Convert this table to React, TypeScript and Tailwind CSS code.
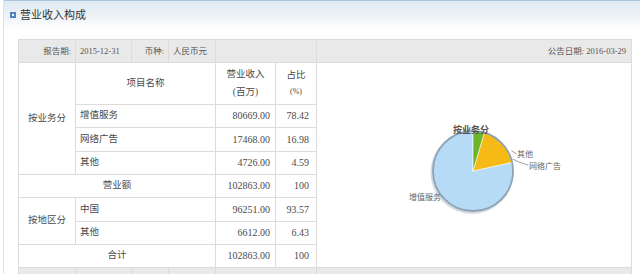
import { Fragment } from "react";

const font = "font-['Liberation_Serif','Noto_Sans_CJK_SC',serif]";

function PieChart() {
  return (
    <svg width="314" height="204" viewBox="317 64 314 204" className="block">
      <circle cx="472" cy="173.5" r="41.5" fill="#c3cad2" opacity="0.7" />
      <path d="M473,172 L512.07,163.41 A40,40 0 1,1 473,132 Z" fill="#b6dbf7" stroke="#ffffff" strokeWidth="0.6" />
      <path d="M473,172 L484.36,133.65 A40,40 0 0,1 512.07,163.41 Z" fill="#f5ba16" stroke="#ffffff" strokeWidth="0.6" />
      <path d="M473,172 L473,132 A40,40 0 0,1 484.36,133.65 Z" fill="#6db62c" stroke="#ffffff" strokeWidth="0.6" />
      <circle cx="473" cy="172" r="40" fill="none" stroke="#8ea2b6" strokeWidth="1.8" />
      <polyline points="511.5,151.5 516.5,155" fill="none" stroke="#8a8a8a" strokeWidth="0.8" />
      <polyline points="512.5,160 520,163.5 528,166" fill="none" stroke="#8a8a8a" strokeWidth="0.8" />
      <text x="471" y="134" textAnchor="middle" fontSize="9" fontWeight="bold" fill="#555" fontFamily="Noto Sans CJK SC, sans-serif">
        按业务分
      </text>
      <text x="517" y="158" fontSize="8" fill="#666" fontFamily="Noto Sans CJK SC, sans-serif">
        其他
      </text>
      <text x="529" y="170" fontSize="8" fill="#666" fontFamily="Noto Sans CJK SC, sans-serif">
        网络广告
      </text>
      <text x="441" y="201" textAnchor="end" fontSize="8" fill="#666" fontFamily="Noto Sans CJK SC, sans-serif">
        增值服务
      </text>
    </svg>
  );
}

const rows = [
  { name: "增值服务", value: "80669.00", pct: "78.42" },
  { name: "网络广告", value: "17468.00", pct: "16.98" },
  { name: "其他", value: "4726.00", pct: "4.59" },
];

export default function App() {
  return (
    <div className={`h-[274px] w-[640px] overflow-hidden bg-white ${font} text-[#4a4a4a]`}>
      <div className="ml-[3px] h-full border-l border-[#e2e2e2]">
        <div className="flex h-[30px] items-center gap-[4px] border-t border-[#a9c4dc] bg-gradient-to-b from-[#dfe9f2] via-[#edf2f7] to-white pb-[2px] pl-[6px]">
          <span className="flex h-[6px] w-[6px] items-center justify-center bg-[#4f86c2]">
            <span className="h-[2px] w-[2px] bg-white" />
          </span>
          <span className="font-['Noto_Sans_CJK_SC',sans-serif] text-[11px] text-[#333]">营业收入构成</span>
        </div>

        <div className="ml-[14px] mt-[9px] grid w-[614px] grid-cols-[56px_55px_36px_46px_59px_40px_314px] grid-rows-[22px_41px_22px_23px_22px_22px_23px_22px_22px_22px] gap-px bg-[#dcdcdc] p-px text-[9.5px] leading-none">
          {/* top info row */}
          <div className="flex items-center justify-end bg-[#e9e9e9] pr-[4px] text-[8.5px] text-[#555]">报告期:</div>
          <div className="flex items-center bg-[#e9e9e9] pl-[4px] text-[8.5px] text-[#555]">2015-12-31</div>
          <div className="flex items-center justify-end bg-[#e9e9e9] pr-[4px] text-[8.5px] text-[#555]">币种:</div>
          <div className="flex items-center bg-[#e9e9e9] pl-[4px] text-[8.5px] text-[#555]">人民币元</div>
          <div className="col-span-2 bg-[#e9e9e9]" />
          <div className="flex items-center justify-end bg-[#e9e9e9] pr-[5px] text-[8.5px] text-[#555]">公告日期: 2016-03-29</div>

          {/* column headings */}
          <div className="row-span-4 flex items-center justify-center bg-white">按业务分</div>
          <div className="col-span-3 flex items-center justify-center bg-white">项目名称</div>
          <div className="flex flex-col items-center justify-center gap-[8px] bg-white">
            <span>营业收入</span>
            <span>(百万)</span>
          </div>
          <div className="flex flex-col items-center justify-center gap-[8px] bg-white">
            <span>占比</span>
            <span className="text-[8px]">(%)</span>
          </div>
          <div className="row-span-8 bg-white">
            <PieChart />
          </div>

          {rows.map((r) => (
            <Fragment key={r.name}>
              <div className="col-span-3 flex items-center bg-white pl-[4px]">{r.name}</div>
              <div className="flex items-center justify-end bg-white pr-[5px] text-[10px]">{r.value}</div>
              <div className="flex items-center justify-end bg-white pr-[7px] text-[10px]">{r.pct}</div>
            </Fragment>
          ))}

          <div className="col-span-4 flex items-center justify-center bg-white">营业额</div>
          <div className="flex items-center justify-end bg-white pr-[5px] text-[10px]">102863.00</div>
          <div className="flex items-center justify-end bg-white pr-[7px] text-[10px]">100</div>

          <div className="row-span-2 flex items-center justify-center bg-white">按地区分</div>
          <div className="col-span-3 flex items-center bg-white pl-[4px]">中国</div>
          <div className="flex items-center justify-end bg-white pr-[5px] text-[10px]">96251.00</div>
          <div className="flex items-center justify-end bg-white pr-[7px] text-[10px]">93.57</div>
          <div className="col-span-3 flex items-center bg-white pl-[4px]">其他</div>
          <div className="flex items-center justify-end bg-white pr-[5px] text-[10px]">6612.00</div>
          <div className="flex items-center justify-end bg-white pr-[7px] text-[10px]">6.43</div>

          <div className="col-span-4 flex items-center justify-center bg-white">合计</div>
          <div className="flex items-center justify-end bg-white pr-[5px] text-[10px]">102863.00</div>
          <div className="flex items-center justify-end bg-white pr-[7px] text-[10px]">100</div>

          {/* next block's info row, cut off at the bottom */}
          <div className="bg-[#e9e9e9]" />
          <div className="bg-[#e9e9e9]" />
          <div className="bg-[#e9e9e9]" />
          <div className="bg-[#e9e9e9]" />
          <div className="col-span-2 bg-[#e9e9e9]" />
          <div className="bg-[#e9e9e9]" />
        </div>
      </div>
    </div>
  );
}
